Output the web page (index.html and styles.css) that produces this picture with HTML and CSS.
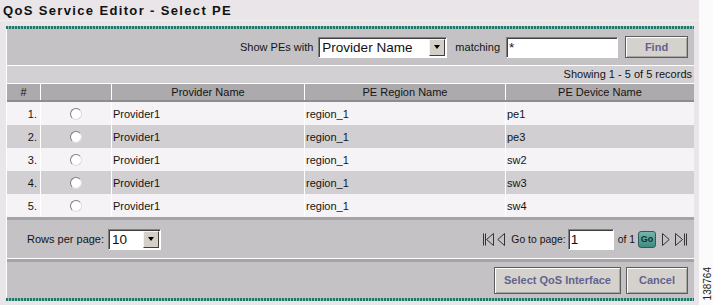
FILE: index.html
```html
<!DOCTYPE html>
<html>
<head>
  <link rel="stylesheet" href="styles.css">
</head>

<body>
<div class="page">
  <div class="screen">
    <h1 class="title">QoS Service Editor - Select PE</h1>
    <div class="panel">
      <div class="stripe"></div>
      <div class="inner">
        <div class="filter">
          <span class="lbl">Show PEs with</span>
          <span class="select field-by"><span class="val">Provider Name</span><span class="arrow"></span></span>
          <span class="lbl match-lbl">matching</span>
          <input class="text match" type="text" value="*" readonly>
          <button class="btn find">Find</button>
        </div>
        <div class="count">Showing 1 - 5 of 5 records</div>

        <div class="row head">
          <div class="cell c">#</div>
          <div class="cell"></div>
          <div class="cell c">Provider Name</div>
          <div class="cell c">PE Region Name</div>
          <div class="cell c">PE Device Name</div>
        </div>
        <div class="row odd">
          <div class="cell num">1.</div>
          <div class="cell c"><span class="radio"></span></div>
          <div class="cell">Provider1</div>
          <div class="cell">region_1</div>
          <div class="cell">pe1</div>
        </div>
        <div class="row even">
          <div class="cell num">2.</div>
          <div class="cell c"><span class="radio"></span></div>
          <div class="cell">Provider1</div>
          <div class="cell">region_1</div>
          <div class="cell">pe3</div>
        </div>
        <div class="row odd">
          <div class="cell num">3.</div>
          <div class="cell c"><span class="radio"></span></div>
          <div class="cell">Provider1</div>
          <div class="cell">region_1</div>
          <div class="cell">sw2</div>
        </div>
        <div class="row even">
          <div class="cell num">4.</div>
          <div class="cell c"><span class="radio"></span></div>
          <div class="cell">Provider1</div>
          <div class="cell">region_1</div>
          <div class="cell">sw3</div>
        </div>
        <div class="row odd">
          <div class="cell num">5.</div>
          <div class="cell c"><span class="radio"></span></div>
          <div class="cell">Provider1</div>
          <div class="cell">region_1</div>
          <div class="cell">sw4</div>
        </div>

        <div class="pager">
          <div class="rows">
            <span class="lbl">Rows per page:</span>
            <span class="select per-page"><span class="val">10</span><span class="arrow"></span></span>
          </div>
          <div class="nav">
            <svg class="first" width="12" height="13" viewBox="0 0 12 13"><path d="M1.5 .5v12M3.5 .5v12M11.5 .5L4.5 6.5l7 6z" fill="none" stroke="#333"/></svg>
            <svg class="prev" width="8" height="13" viewBox="0 0 8 13"><path d="M7.5 .5L.8 6.5l6.7 6z" fill="none" stroke="#333"/></svg>
            <span class="lbl goto">Go to page:</span>
            <input class="text page-no" type="text" value="1" readonly>
            <span class="lbl of">of 1</span>
            <span class="go">Go</span>
            <svg class="next" width="8" height="13" viewBox="0 0 8 13"><path d="M.5 .5l6.7 6-6.7 6z" fill="none" stroke="#333"/></svg>
            <svg class="last" width="13" height="13" viewBox="0 0 13 13"><path d="M.5 .5l7 6-7 6zM9.5 .5v12M11.5 .5v12" fill="none" stroke="#333"/></svg>
          </div>
        </div>

        <div class="actions">
          <button class="btn big">Select QoS Interface</button>
          <button class="btn cancel">Cancel</button>
        </div>
      </div>
      <div class="stripe"></div>
    </div>
  </div>
  <div class="figno">138764</div>
</div>
</body>

</html>
```

FILE: styles.css
```css
* {
  box-sizing: border-box;
}
body {
  margin: 0;
  background: #fbfbfb;
  font-family: "Liberation Sans", Arial, sans-serif;
  font-size: 11px;
  color: #141414;
}
.page {
  display: flex;
  width: 713px;
  height: 305px;
}
.screen {
  width: 700px;
  background: #e9e5e8;
}
.title {
  margin: 0;
  height: 21px;
  padding: 3px 0 0 3px;
  font-size: 13px;
  line-height: 15px;
  letter-spacing: 1.35px;
  font-weight: bold;
  color: #111;
  border-bottom: 1px solid #f2eff1;
}
.panel {
  width: 688px;
  margin: 5px 0 0 6px;
}
.stripe {
  height: 3px;
  background: repeating-linear-gradient(90deg, #24766b 0 2px, #8cc3b7 2px 3px);
}
.inner {
  border-left: 1px solid #fff;
}

/* filter */
.filter {
  height: 37px;
  display: flex;
  align-items: center;
  justify-content: flex-end;
  padding-right: 6px;
  background: #c4c2c4;
  border-bottom: 1px solid #fff;
}
.lbl {
  white-space: nowrap;
}
.select {
  display: flex;
  align-items: center;
  height: 21px;
  background: #fff;
  border: 1px solid;
  border-color: #808080 #fff #fff #808080;
  box-shadow: inset 1px 1px 0 #404040;
  font-size: 13.5px;
  color: #111;
}
.select .val {
  flex: 1;
  padding-left: 3px;
}
.select .arrow {
  width: 16px;
  height: 17px;
  margin-right: 1px;
  background: #d4d0c8;
  border: 1px solid;
  border-color: #f4f4f4 #404040 #404040 #f4f4f4;
  display: flex;
  align-items: center;
  justify-content: center;
}
.select .arrow::after {
  content: "";
  border-left: 3.5px solid transparent;
  border-right: 3.5px solid transparent;
  border-top: 4px solid #000;
}
.field-by {
  width: 129px;
  margin-left: 5px;
}
.match-lbl {
  margin-left: 8px;
}
.text {
  height: 21px;
  padding: 0 2px;
  background: #fff;
  border: 1px solid;
  border-color: #808080 #fff #fff #808080;
  box-shadow: inset 1px 1px 0 #404040;
  font-family: "Liberation Sans", Arial, sans-serif;
  font-size: 13.5px;
  color: #111;
  outline: none;
}
.match {
  width: 112px;
  margin-left: 6px;
}
.btn {
  height: 22px;
  padding: 0;
  background: #d5d2cd;
  border: 1px solid #5c5c5c;
  box-shadow: inset 1px 1px 0 #fff, inset -1px -1px 0 #a8a6a2;
  font-family: "Liberation Sans", Arial, sans-serif;
  font-size: 11px;
  font-weight: bold;
  color: #62628f;
}
.find {
  width: 63px;
  margin-left: 7px;
}

.count {
  height: 18px;
  padding: 2px 2px 0 0;
  text-align: right;
  background: #d2d0d2;
  border-bottom: 1px solid #fff;
}

/* grid */
.row {
  display: grid;
  grid-template-columns: 33px 70px 192px 200px 1fr;
  column-gap: 1px;
  background: #fff;
}
.cell {
  display: flex;
  align-items: center;
  padding-left: 1px;
  white-space: nowrap;
}
.cell.c {
  justify-content: center;
  padding-left: 0;
}
.cell.num {
  justify-content: flex-end;
  padding-right: 3px;
}
.head {
  height: 18px;
  border-bottom: 2px solid #8e8c8e;
}
.head .cell {
  background: #acaaac;
}
.odd .cell,
.even .cell {
  height: 23px;
}
.odd .cell {
  background: #f5f3f5;
}
.even .cell {
  background: #d1cfd1;
}
.radio {
  width: 12px;
  height: 12px;
  border-radius: 50%;
  background: #fff;
  border: 1px solid;
  border-color: #7c7c7c #dcdcdc #dcdcdc #7c7c7c;
}

/* footer */
.pager {
  height: 42px;
  display: flex;
  align-items: center;
  justify-content: space-between;
  padding: 0 6px 0 20px;
  background: #c4c2c4;
  border-top: 3px solid #a5a3a5;
  border-bottom: 1px solid #fff;
}
.rows {
  display: flex;
  align-items: center;
}
.per-page {
  width: 53px;
  margin-left: 4px;
}
.nav {
  display: flex;
  align-items: center;
}
.first {
  margin-right: 3px;
}
.goto {
  margin-left: 6px;
  font-size: 10.4px;
}
.page-no {
  width: 46px;
  margin-left: 2px;
}
.of {
  margin-left: 4px;
  font-size: 10.4px;
}
.go {
  width: 18px;
  height: 17px;
  margin-left: 3px;
  border-radius: 3px;
  border: 1px solid #2e5d57;
  background: linear-gradient(#74b6ab, #3f8b80);
  color: #14302c;
  font-size: 9px;
  font-weight: bold;
  display: flex;
  align-items: center;
  justify-content: center;
}
.next {
  margin-left: 6px;
}
.last {
  margin-left: 5px;
}
.actions {
  height: 39px;
  display: flex;
  align-items: center;
  justify-content: flex-end;
  padding-right: 6px;
  background: #c4c2c4;
  border-top: 3px solid #a5a3a5;
}
.actions .btn {
  height: 27px;
}
.big {
  width: 127px;
}
.cancel {
  width: 62px;
  margin-left: 5px;
}

.figno {
  align-self: flex-end;
  margin: 0 0 5px 3px;
  writing-mode: vertical-rl;
  transform: rotate(180deg);
  font-size: 10px;
  color: #222;
}
```
